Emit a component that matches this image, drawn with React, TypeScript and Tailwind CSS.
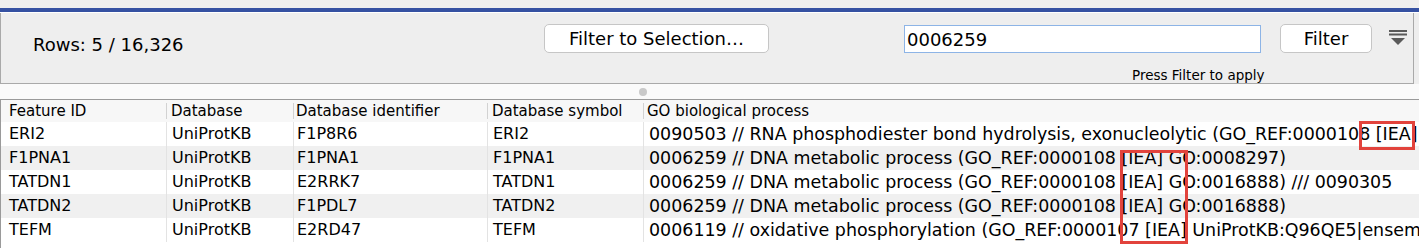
import React from "react";

type Row = {
  id: string;
  db: string;
  ident: string;
  sym: string;
  go: string;
};

const rows: Row[] = [
  {
    id: "ERI2",
    db: "UniProtKB",
    ident: "F1P8R6",
    sym: "ERI2",
    go: "0090503 // RNA phosphodiester bond hydrolysis, exonucleolytic (GO_REF:0000108 [IEA] GO:0000175)",
  },
  {
    id: "F1PNA1",
    db: "UniProtKB",
    ident: "F1PNA1",
    sym: "F1PNA1",
    go: "0006259 // DNA metabolic process (GO_REF:0000108 [IEA] GO:0008297)",
  },
  {
    id: "TATDN1",
    db: "UniProtKB",
    ident: "E2RRK7",
    sym: "TATDN1",
    go: "0006259 // DNA metabolic process (GO_REF:0000108 [IEA] GO:0016888) /// 0090305",
  },
  {
    id: "TATDN2",
    db: "UniProtKB",
    ident: "F1PDL7",
    sym: "TATDN2",
    go: "0006259 // DNA metabolic process (GO_REF:0000108 [IEA] GO:0016888)",
  },
  {
    id: "TEFM",
    db: "UniProtKB",
    ident: "E2RD47",
    sym: "TEFM",
    go: "0006119 // oxidative phosphorylation (GO_REF:0000107 [IEA] UniProtKB:Q96QE5|ensemb",
  },
];

const headers = [
  "Feature ID",
  "Database",
  "Database identifier",
  "Database symbol",
  "GO biological process",
];

// padding per column so text starts where the reference has it
const headerPad = ["pl-[8px]", "pl-[5px]", "pl-[3px]", "pl-[5px]", "pl-[4px]"];

const FilterMenuIcon = () => (
  <svg width="18" height="16" viewBox="0 0 18 16" fill="#5a5a5a">
    <rect x="0" y="0" width="18" height="2" />
    <rect x="0" y="3.5" width="18" height="2" />
    <polygon points="2,8 16,8 9,15" />
  </svg>
);

export default function App() {
  return (
    <div
      className="relative w-[1419px] h-[248px] overflow-hidden bg-white text-black"
      style={{ fontFamily: '"DejaVu Sans", sans-serif' }}
    >
      {/* top chrome */}
      <div className="h-[8px] bg-[#eeeeee]" />
      <div className="h-[4px] bg-[#3551a2]" />
      <div className="h-px bg-white" />

      {/* filter panel */}
      <div className="flex">
        <div className="w-[1414px] h-[71px] bg-[#eeeeee] border-l border-r border-b border-[#a9a9a9] pt-[11px]">
          <div className="flex items-start">
            <span className="ml-[32px] mt-[6px] w-[511px] text-[18px] leading-[29px]">
              Rows: 5 / 16,326
            </span>
            <button className="w-[225px] h-[29px] bg-white border border-[#c6c6c6] rounded-[5px] text-[18px] leading-none">
              Filter to Selection…
            </button>
            <div className="ml-[135px] mt-px w-[357px] h-[28px] bg-white border border-[#8db4e6] flex items-center px-[2px] text-[18px]">
              0006259
            </div>
            <button className="ml-[19px] w-[92px] h-[29px] bg-white border border-[#c6c6c6] rounded-[5px] text-[18px] leading-none">
              Filter
            </button>
            <div className="ml-[17px] mt-[6px]">
              <FilterMenuIcon />
            </div>
          </div>
          <div className="mt-[8px] pl-[1131px] text-[13.5px] leading-[16px]">
            Press Filter to apply
          </div>
        </div>
        <div className="flex-1 h-[71px] bg-[#eeeeee]" />
      </div>

      {/* splitter */}
      <div className="h-[15px] bg-[#fafafa] flex items-center">
        <div className="ml-[639px] mt-px w-[8px] h-[8px] rounded-full bg-[#c9c9c9]" />
      </div>

      {/* table */}
      <div className="border-t border-l border-[#9a9a9a] h-[150px]">
        <div className="grid grid-cols-[165px_127px_194px_156px_1fr] h-[22px] bg-[#f7f7f7] text-[15px] leading-[22px]">
          {headers.map((h, i) => (
            <div
              key={h}
              className={`relative whitespace-nowrap overflow-hidden ${headerPad[i]}`}
            >
              {i > 0 && (
                <span className="absolute left-0 top-[3px] w-px h-[16px] bg-[#d2d2d2]" />
              )}
              {h}
            </div>
          ))}
        </div>
        {rows.map((r, idx) => (
          <div
            key={r.id}
            className={`grid grid-cols-[165px_127px_194px_156px_1fr] h-[24px] leading-[24px] ${
              idx % 2 === 1 ? "bg-[#f0f0f0]" : "bg-white"
            }`}
          >
            <div className="pl-[8px] text-[16px] whitespace-nowrap overflow-hidden">{r.id}</div>
            <div className="pl-[5px] text-[16px] border-l border-[#e3e3e3] whitespace-nowrap overflow-hidden">{r.db}</div>
            <div className="pl-[3px] text-[16px] border-l border-[#e3e3e3] whitespace-nowrap overflow-hidden">{r.ident}</div>
            <div className="pl-[5px] text-[16px] border-l border-[#e3e3e3] whitespace-nowrap overflow-hidden">{r.sym}</div>
            <div className="pl-[5px] text-[17.45px] border-l border-[#e3e3e3] whitespace-nowrap overflow-hidden">{r.go}</div>
          </div>
        ))}
      </div>

      {/* red annotation boxes */}
      <div className="absolute left-[1359px] top-[121px] w-[56px] h-[29px] border-[3px] border-[#e2433c]" />
      <div className="absolute left-[1120px] top-[150px] w-[68px] h-[94px] border-[3px] border-[#e2433c]" />
    </div>
  );
}
